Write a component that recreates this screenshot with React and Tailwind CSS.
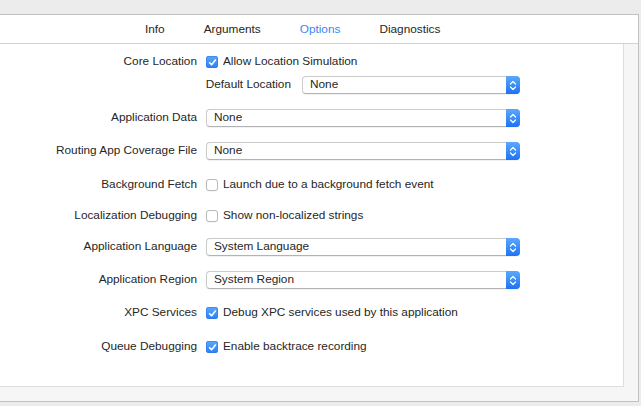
import { useState } from 'react';

const tabs = ["Info", "Arguments", "Options", "Diagnostics"];

function Checkbox({ checked }) {
  if (checked) {
    return (
      <span className="flex h-[12px] w-[12px] shrink-0 items-center justify-center rounded-[3px] bg-gradient-to-b from-[#5aa8fd] to-[#2c7ff4] shadow-[inset_0_0_0_0.5px_#2a74e0]">
        <svg width="9" height="9" viewBox="0 0 9 9" fill="none">
          <path d="M1.6 4.8 L3.6 6.8 L7.4 2" stroke="white" strokeWidth="1.6" strokeLinecap="round" strokeLinejoin="round" />
        </svg>
      </span>
    );
  }
  return (
    <span className="h-[12px] w-[12px] shrink-0 rounded-[3px] border border-[#b9b9b9] bg-white shadow-[0_0.5px_0.5px_rgba(0,0,0,0.08)]" />
  );
}

function Popup({ value, width }) {
  return (
    <div
      className="flex h-[18px] items-center rounded-[4px] border border-[#cbcbcb] border-b-[#b3b3b3] bg-white shadow-[0_0.5px_1px_rgba(0,0,0,0.06)]"
      style={{ width }}
    >
      <span className="flex-1 pl-[7px] leading-none">{value}</span>
      <span className="-mr-px -my-px flex h-[18px] w-[14px] items-center justify-center rounded-r-[4px] bg-gradient-to-b from-[#5aa8fd] to-[#1e72f2]">
        <svg width="8" height="11" viewBox="0 0 8 11" fill="none">
          <path d="M1.5 4 L4 1.5 L6.5 4 M1.5 7 L4 9.5 L6.5 7" stroke="white" strokeWidth="1.2" strokeLinecap="round" strokeLinejoin="round" />
        </svg>
      </span>
    </div>
  );
}

function Row({ label, children, className }) {
  return (
    <div className={"flex h-[20px] items-center " + className}>
      <div className="w-[197px] shrink-0 text-right">{label}</div>
      <div className="ml-[9px] flex items-center">{children}</div>
    </div>
  );
}

function CheckRow({ label, text, checked, className }) {
  return (
    <Row label={label} className={className}>
      <Checkbox checked={checked} />
      <span className="ml-[5px]">{text}</span>
    </Row>
  );
}

export default function App() {
  const [active] = useState("Options");

  return (
    <div className="h-[406px] w-[641px] overflow-hidden bg-[#ececec] pt-[14px] text-[11.8px] text-[#262626] [font-family:'Liberation_Sans',Arial,sans-serif]">
      <div className="flex h-[388px] w-[639px] flex-col border border-l-0 border-[#c2c2c2] bg-white">
        {/* tab bar */}
        <div className="flex h-[29px] shrink-0 items-center gap-[39px] border-b border-[#d2d2d2] bg-white pl-[145px] pt-[2px]">
          {tabs.map((t) => (
            <span key={t} className={t === active ? "text-[#3a86f4]" : ""}>
              {t}
            </span>
          ))}
        </div>

        {/* body */}
        <div className="flex flex-1 bg-[#f6f6f6] pb-[14px] pr-[14px]">
          <div className="flex-1 border-b border-r border-[#dedede] bg-white">
            <CheckRow className="mt-[8px]" label="Core Location" text="Allow Location Simulation" checked />
            <div className="mt-[3px] flex h-[20px] items-center">
              <div className="w-[291px] shrink-0 text-right">Default Location</div>
              <div className="ml-[11px]">
                <Popup value="None" width={218} />
              </div>
            </div>
            <Row className="mt-[13px]" label="Application Data">
              <Popup value="None" width={314} />
            </Row>
            <Row className="mt-[13px]" label="Routing App Coverage File">
              <Popup value="None" width={314} />
            </Row>
            <CheckRow className="mt-[14px]" label="Background Fetch" text="Launch due to a background fetch event" />
            <CheckRow className="mt-[11px]" label="Localization Debugging" text="Show non-localized strings" />
            <Row className="mt-[11px]" label="Application Language">
              <Popup value="System Language" width={314} />
            </Row>
            <Row className="mt-[13px]" label="Application Region">
              <Popup value="System Region" width={314} />
            </Row>
            <CheckRow className="mt-[13px]" label="XPC Services" text="Debug XPC services used by this application" checked />
            <CheckRow className="mt-[14px]" label="Queue Debugging" text="Enable backtrace recording" checked />
          </div>
        </div>
      </div>
    </div>
  );
}
